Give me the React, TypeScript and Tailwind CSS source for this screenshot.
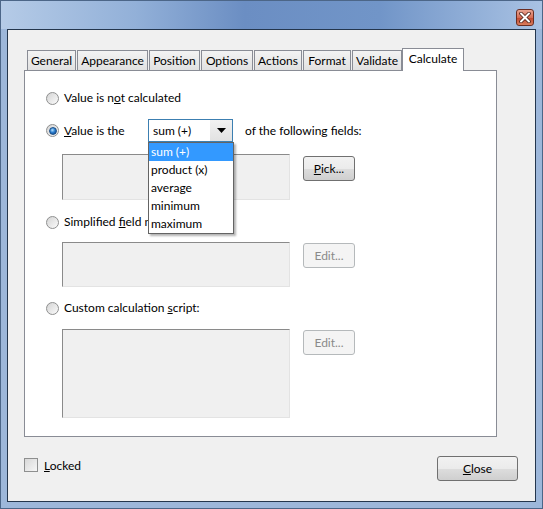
import React from 'react';

const tabs = [
  { label: 'General', w: 'w-[49px]' },
  { label: 'Appearance', w: 'w-[71px]' },
  { label: 'Position', w: 'w-[51px]' },
  { label: 'Options', w: 'w-[52px]' },
  { label: 'Actions', w: 'w-[48px]' },
  { label: 'Format', w: 'w-[48px]' },
  { label: 'Validate', w: 'w-[50px]' },
];

const ops = ['sum (+)', 'product (x)', 'average', 'minimum', 'maximum'];

function Radio({ checked = false }: { checked?: boolean }) {
  return (
    <span className="flex h-[13px] w-[13px] shrink-0 items-center justify-center rounded-full border border-[#8e8f8f] bg-gradient-to-br from-[#d4d4d4] to-[#fbfbfb]">
      {checked && (
        <span className="h-[8px] w-[8px] rounded-full border border-[#1d4f86] bg-[radial-gradient(circle_at_40%_35%,#b5e2ff_0%,#2c7fd0_45%,#0b3c80_100%)]" />
      )}
    </span>
  );
}

function Box({ h }: { h: string }) {
  return (
    <div
      className={`w-[228px] ${h} border-t border-l border-[#8a8a8a] border-r-[#e3e3e3] border-b-[#e3e3e3] border-r border-b bg-[#f0f0f0]`}
    />
  );
}

function Button({ children, disabled = false, w = 'w-[52px]' }: { children: React.ReactNode; disabled?: boolean; w?: string }) {
  return (
    <button
      className={`${w} h-[25px] rounded-[3px] border text-[12px] ${
        disabled
          ? 'border-[#b5b9bb] bg-[#f4f4f4] text-[#8a8a8a]'
          : 'border-[#707070] bg-[linear-gradient(#f2f2f2_0%,#ebebeb_50%,#dddddd_51%,#cfcfcf_100%)] text-black'
      }`}
    >
      {children}
    </button>
  );
}

export default function App() {
  return (
    <div className="w-[543px] h-[509px] flex flex-col border border-[#4c6688] bg-[#9db7da] font-['Lato',sans-serif] text-[12px] leading-none text-black">
      {/* Title bar */}
      <div className="h-[28px] flex items-start justify-end pr-[8px] pt-[8px] bg-[linear-gradient(90deg,#b5cbe7_0%,#92b0d8_25%,#6b8ec3_45%,#7195c8_70%,#a9c2e3_100%)]">
        <div className="w-[18px] h-[17px] rounded-[3px] border border-[#6b2d22] bg-[linear-gradient(#e9a493_0%,#d66d55_50%,#c24a32_55%,#d97e5e_100%)] flex items-center justify-center">
          <svg width="12" height="11" viewBox="0 0 12 11">
            <path d="M2 1.5 L10 9.5 M10 1.5 L2 9.5" stroke="#4a1f17" strokeWidth="3.6" strokeLinecap="round" />
            <path d="M2 1.5 L10 9.5 M10 1.5 L2 9.5" stroke="#ffffff" strokeWidth="2" strokeLinecap="round" />
          </svg>
        </div>
      </div>

      {/* Client area */}
      <div className="flex-1 mx-[6px] mb-[6px] border border-[#24364d] bg-[#f0f0f0] pl-[16px] pt-[18px]">
        {/* Tabs */}
        <div className="flex items-end h-[22px] pl-[3px]">
          {tabs.map((t) => (
            <div
              key={t.label}
              className={`${t.w} mr-[1px] h-[20px] border border-b-0 border-[#898c95] bg-gradient-to-b from-[#f3f3f3] to-[#e1e1e1] flex items-center justify-center pt-[1px]`}
            >
              {t.label}
            </div>
          ))}
          <div className="relative z-10 -ml-[1px] -mb-[1px] w-[62px] h-[23px] border border-b-0 border-[#898c95] bg-white flex items-start justify-center pt-[4px]">
            Calculate
          </div>
        </div>

        {/* Panel */}
        <div className="w-[473px] h-[367px] border border-[#898c95] bg-white pl-[21px] pt-[19px]">
          <div className="h-[16px] flex items-center gap-[5px]">
            <Radio />
            <span>
              Value is n<u className="underline-offset-[1px]">o</u>t calculated
            </span>
          </div>

          <div className="mt-[13px] h-[23px] flex items-center">
            <Radio checked />
            <span className="ml-[5px] w-[84px]">
              <u className="underline-offset-[1px]">V</u>alue is the
            </span>
            <div className="relative w-[85px] h-[23px] border border-[#3c7fb1] bg-white flex">
              <div className="flex-1 flex items-center pl-[4px]">sum (+)</div>
              <div className="w-[22px] flex items-center justify-center bg-gradient-to-b from-[#f1f1f1] to-[#e2e2e2]">
                <svg width="9" height="5" viewBox="0 0 9 5">
                  <path d="M0 0 H9 L4.5 5 Z" fill="#000" />
                </svg>
              </div>
              {/* Open list */}
              <div className="absolute left-[-1px] top-[22px] z-20 w-[86px] border border-[#646464] bg-white shadow-[2px_2px_2px_rgba(0,0,0,0.3)]">
                {ops.map((o, i) => (
                  <div
                    key={o}
                    className={`h-[18px] flex items-center pl-[2px] ${i === 0 ? 'bg-[#3399ff] text-white' : ''}`}
                  >
                    {o}
                  </div>
                ))}
              </div>
            </div>
            <span className="ml-[12px]">of the following fields:</span>
          </div>

          <div className="mt-[12px] pl-[16px] flex items-start gap-[13px]">
            <Box h="h-[46px]" />
            <div className="mt-[2px]">
              <Button>
                <u className="underline-offset-[1px]">P</u>ick...
              </Button>
            </div>
          </div>

          <div className="mt-[14px] h-[16px] flex items-center gap-[5px]">
            <Radio />
            <span>
              Simplified <u className="underline-offset-[1px]">f</u>ield notation:
            </span>
          </div>

          <div className="mt-[12px] pl-[16px] flex items-start gap-[13px]">
            <Box h="h-[45px]" />
            <div className="mt-[1px]">
              <Button disabled>Edit...</Button>
            </div>
          </div>

          <div className="mt-[13px] h-[16px] flex items-center gap-[5px]">
            <Radio />
            <span>
              Custom calculation <u className="underline-offset-[1px]">s</u>cript:
            </span>
          </div>

          <div className="mt-[13px] pl-[16px] flex items-start gap-[13px]">
            <Box h="h-[89px]" />
            <div className="mt-[1px]">
              <Button disabled>Edit...</Button>
            </div>
          </div>
        </div>

        {/* Footer */}
        <div className="mt-[19px] w-[494px] flex items-start justify-between">
          <div className="mt-[1px] h-[16px] flex items-center gap-[6px]">
            <span className="w-[14px] h-[14px] border border-[#8e8f8f] bg-gradient-to-br from-[#d8d8d8] to-[#f6f6f6]" />
            <span className="pt-[2px]">
              <u className="underline-offset-[1px]">L</u>ocked
            </span>
          </div>
          <Button w="w-[81px]">
            <u className="underline-offset-[1px]">C</u>lose
          </Button>
        </div>
      </div>
    </div>
  );
}
